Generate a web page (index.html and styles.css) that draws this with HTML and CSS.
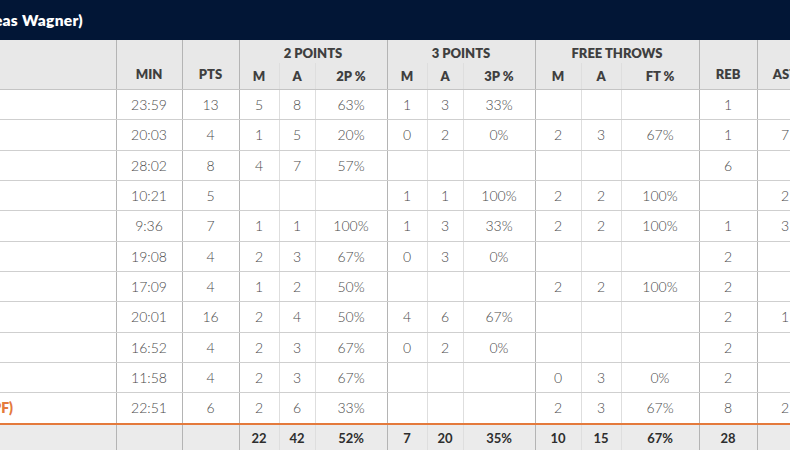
FILE: index.html
```html
<!DOCTYPE html>
<html>
<head>
<meta charset="utf-8">
<link rel="stylesheet" href="styles.css">
</head>
<body>
<div class="board">
  <div class="titlebar"><div class="title-text">Head Coach (Andreas Wagner)</div></div>
  <table class="stats">
    <colgroup>
      <col class="c-name"><col class="c-min"><col class="c-pts">
      <col class="c-m"><col class="c-a"><col class="c-p">
      <col class="c-m"><col class="c-a"><col class="c-p">
      <col class="c-fm"><col class="c-fa"><col class="c-fp">
      <col class="c-reb"><col class="c-ast"><col class="c-ast">
    </colgroup>
    <thead>
      <tr class="grp">
        <th rowspan="2" class="name"></th>
        <th rowspan="2" class="bl">MIN</th>
        <th rowspan="2" class="bl">PTS</th>
        <th colspan="3" class="bl">2 POINTS</th>
        <th colspan="3" class="bl">3 POINTS</th>
        <th colspan="3" class="bl">FREE THROWS</th>
        <th rowspan="2" class="bl">REB</th>
        <th rowspan="2" class="bl">AST</th>
        <th rowspan="2" class="bl">STL</th>
      </tr>
      <tr class="sub">
        <th class="bl">M</th><th class="il">A</th><th class="il">2P %</th>
        <th class="bl">M</th><th class="il">A</th><th class="il">3P %</th>
        <th class="bl">M</th><th class="il">A</th><th class="il">FT %</th>
      </tr>
    </thead>
    <tbody>
      <tr><td class="name"></td><td class="bl">23:59</td><td class="bl">13</td><td class="bl">5</td><td class="il">8</td><td class="il">63%</td><td class="bl">1</td><td class="il">3</td><td class="il">33%</td><td class="bl"></td><td class="il"></td><td class="il"></td><td class="bl">1</td><td class="bl"></td><td class="bl"></td></tr>
      <tr><td class="name"></td><td class="bl">20:03</td><td class="bl">4</td><td class="bl">1</td><td class="il">5</td><td class="il">20%</td><td class="bl">0</td><td class="il">2</td><td class="il">0%</td><td class="bl">2</td><td class="il">3</td><td class="il">67%</td><td class="bl">1</td><td class="bl">7</td><td class="bl"></td></tr>
      <tr><td class="name"></td><td class="bl">28:02</td><td class="bl">8</td><td class="bl">4</td><td class="il">7</td><td class="il">57%</td><td class="bl"></td><td class="il"></td><td class="il"></td><td class="bl"></td><td class="il"></td><td class="il"></td><td class="bl">6</td><td class="bl"></td><td class="bl"></td></tr>
      <tr><td class="name"></td><td class="bl">10:21</td><td class="bl">5</td><td class="bl"></td><td class="il"></td><td class="il"></td><td class="bl">1</td><td class="il">1</td><td class="il">100%</td><td class="bl">2</td><td class="il">2</td><td class="il">100%</td><td class="bl"></td><td class="bl">2</td><td class="bl"></td></tr>
      <tr><td class="name"></td><td class="bl">9:36</td><td class="bl">7</td><td class="bl">1</td><td class="il">1</td><td class="il">100%</td><td class="bl">1</td><td class="il">3</td><td class="il">33%</td><td class="bl">2</td><td class="il">2</td><td class="il">100%</td><td class="bl">1</td><td class="bl">3</td><td class="bl"></td></tr>
      <tr><td class="name"></td><td class="bl">19:08</td><td class="bl">4</td><td class="bl">2</td><td class="il">3</td><td class="il">67%</td><td class="bl">0</td><td class="il">3</td><td class="il">0%</td><td class="bl"></td><td class="il"></td><td class="il"></td><td class="bl">2</td><td class="bl"></td><td class="bl"></td></tr>
      <tr><td class="name"></td><td class="bl">17:09</td><td class="bl">4</td><td class="bl">1</td><td class="il">2</td><td class="il">50%</td><td class="bl"></td><td class="il"></td><td class="il"></td><td class="bl">2</td><td class="il">2</td><td class="il">100%</td><td class="bl">2</td><td class="bl"></td><td class="bl"></td></tr>
      <tr><td class="name"></td><td class="bl">20:01</td><td class="bl">16</td><td class="bl">2</td><td class="il">4</td><td class="il">50%</td><td class="bl">4</td><td class="il">6</td><td class="il">67%</td><td class="bl"></td><td class="il"></td><td class="il"></td><td class="bl">2</td><td class="bl">1</td><td class="bl"></td></tr>
      <tr><td class="name"></td><td class="bl">16:52</td><td class="bl">4</td><td class="bl">2</td><td class="il">3</td><td class="il">67%</td><td class="bl">0</td><td class="il">2</td><td class="il">0%</td><td class="bl"></td><td class="il"></td><td class="il"></td><td class="bl">2</td><td class="bl"></td><td class="bl"></td></tr>
      <tr><td class="name"></td><td class="bl">11:58</td><td class="bl">4</td><td class="bl">2</td><td class="il">3</td><td class="il">67%</td><td class="bl"></td><td class="il"></td><td class="il"></td><td class="bl">0</td><td class="il">3</td><td class="il">0%</td><td class="bl">2</td><td class="bl"></td><td class="bl"></td></tr>
      <tr class="last"><td class="name"><div class="pf">(PF)</div></td><td class="bl">22:51</td><td class="bl">6</td><td class="bl">2</td><td class="il">6</td><td class="il">33%</td><td class="bl"></td><td class="il"></td><td class="il"></td><td class="bl">2</td><td class="il">3</td><td class="il">67%</td><td class="bl">8</td><td class="bl">2</td><td class="bl"></td></tr>
      <tr class="total"><td class="name"></td><td class="bl"></td><td class="bl"></td><td class="bl">22</td><td class="il">42</td><td class="il">52%</td><td class="bl">7</td><td class="il">20</td><td class="il">35%</td><td class="bl">10</td><td class="il">15</td><td class="il">67%</td><td class="bl">28</td><td class="bl"></td><td class="bl"></td></tr>
    </tbody>
  </table>
</div>
</body>
</html>
```

FILE: styles.css
```css
html, body {
  margin: 0;
  padding: 0;
  background: #ffffff;
}
body {
  width: 790px;
  height: 450px;
  overflow: hidden;
  font-family: "Lato", "Noto Sans", sans-serif;
}
.board {
  margin-left: -200px;
  width: 1200px;
}
.titlebar {
  height: 40px;
  background: #021636;
  display: flex;
  align-items: center;
}
.title-text {
  width: 283px;
  text-align: right;
  white-space: nowrap;
  color: #ffffff;
  font-weight: 800;
  font-size: 15.5px;
  letter-spacing: 0.3px;
}
.stats {
  border-collapse: collapse;
  table-layout: fixed;
  width: 1069px;
}
.c-name { width: 316px; }
.c-min { width: 66px; }
.c-pts { width: 57px; }
.c-m { width: 40px; }
.c-a { width: 36px; }
.c-p { width: 72px; }
.c-fm { width: 46px; }
.c-fa { width: 40px; }
.c-fp { width: 78px; }
.c-reb { width: 58px; }
.c-ast { width: 56px; }
.stats th, .stats td {
  padding: 0;
  text-align: center;
  white-space: nowrap;
}
.stats thead th {
  background: #e8e8e8;
  color: #3f3f3f;
  font-weight: 800;
  font-size: 13px;
}
.grp th {
  height: 21px;
  vertical-align: middle;
  padding-top: 2px;
}
.grp th[rowspan] {
  vertical-align: bottom;
  padding-bottom: 7px;
}
.sub th {
  height: 26px;
  vertical-align: middle;
}
.bl { border-left: 1px solid #b4b4b4; }
.il { border-left: 1px solid #dedede; }
.stats thead tr.sub th, .stats thead th[rowspan] {
  border-bottom: 1px solid #c4c4c4;
}
.stats tbody td {
  height: 29.33px;
  font-size: 14px;
  font-weight: 300;
  color: #4a4a4a;
  border-bottom: 1px solid #cfcfcf;
}
.stats tbody tr.last td {
  border-bottom: 2px solid #e47a3c;
}
.stats tbody tr.total td {
  background: #ebebeb;
  font-weight: 700;
  font-size: 13px;
  color: #2e2e2e;
  height: 27px;
  padding-bottom: 1px;
  vertical-align: middle;
}
.pf {
  width: 213px;
  text-align: right;
  color: #e47a3c;
  font-weight: 800;
  font-size: 14px;
}
```
